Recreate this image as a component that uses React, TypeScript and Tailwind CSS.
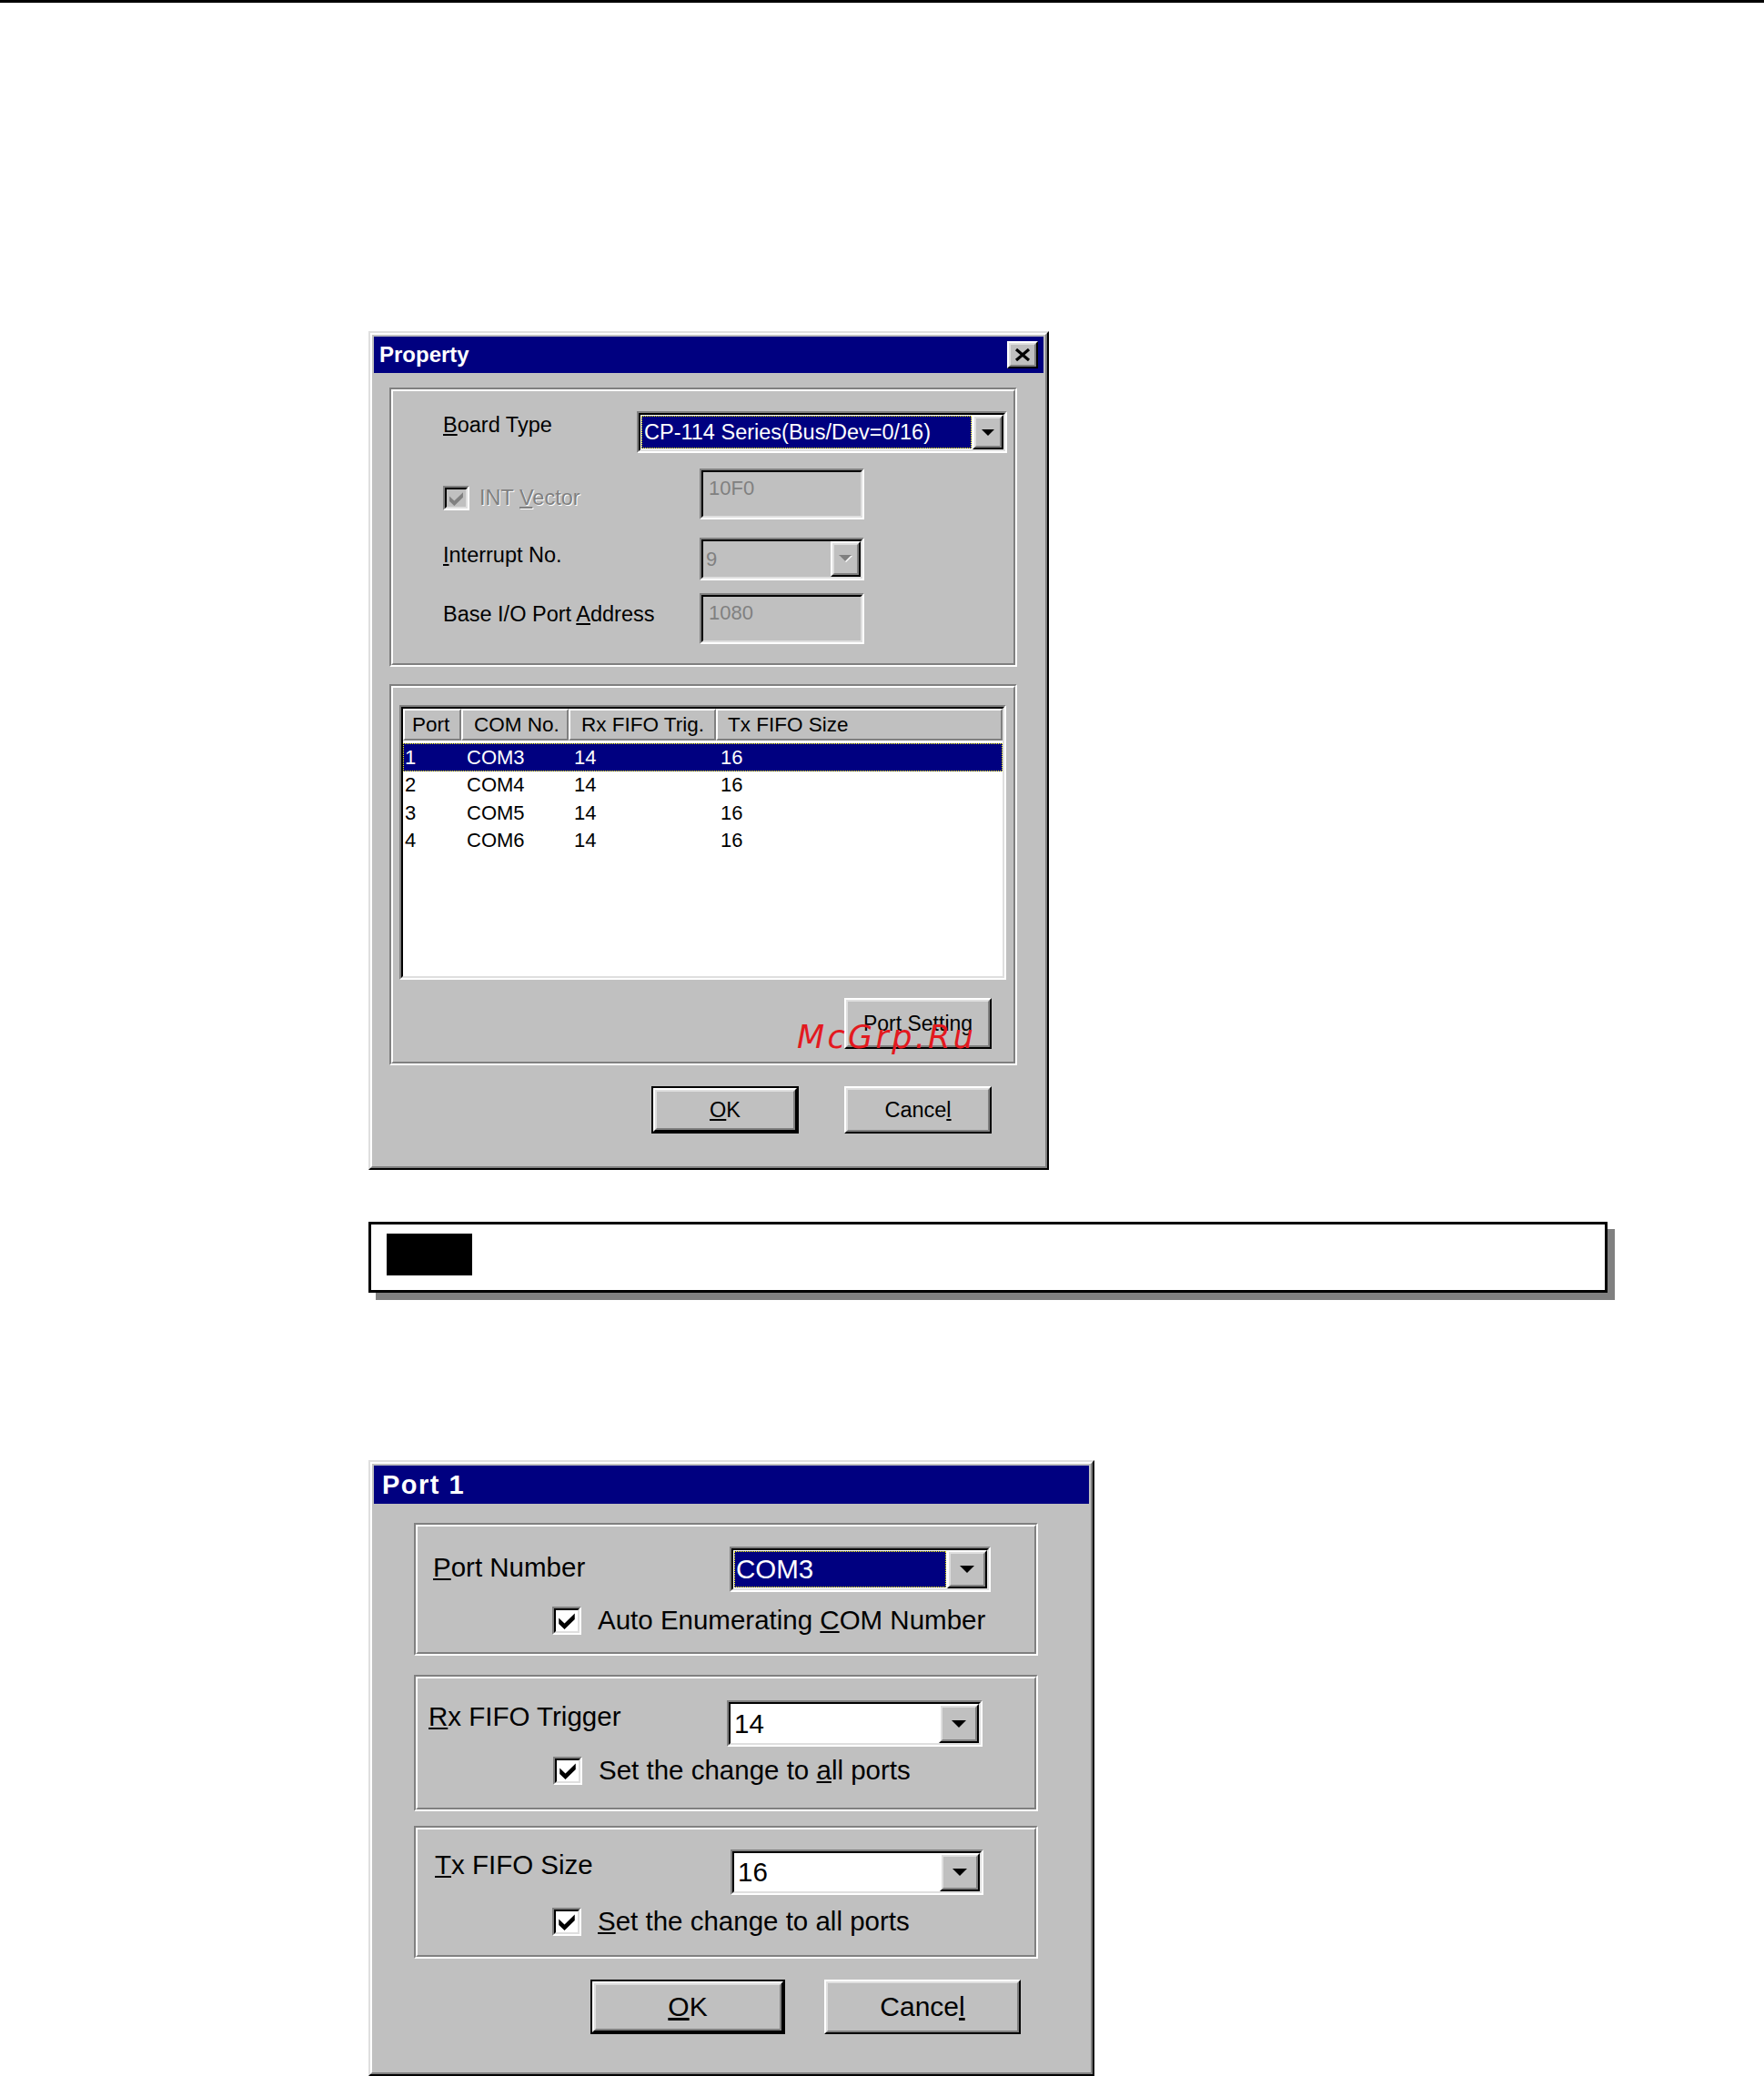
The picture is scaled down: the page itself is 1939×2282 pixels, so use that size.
import React from "react";

type BoxProps = {
  className?: string;
  inner?: string;
  children?: React.ReactNode;
};

// Win98 style bevels, every edge doubled to 2px
const Raised = ({ className = "", inner = "", children }: BoxProps) => (
  <div
    className={`border-2 border-t-white border-l-white border-r-black border-b-black ${className}`}
  >
    <div
      className={`flex h-full w-full items-center justify-center border-2 border-t-[#dfdfdf] border-l-[#dfdfdf] border-r-[#808080] border-b-[#808080] bg-[#c0c0c0] ${inner}`}
    >
      {children}
    </div>
  </div>
);

const Sunken = ({ className = "", inner = "", children }: BoxProps) => (
  <div
    className={`border-2 border-t-[#808080] border-l-[#808080] border-r-white border-b-white ${className}`}
  >
    <div
      className={`h-full w-full border-2 border-t-black border-l-black border-r-[#dfdfdf] border-b-[#dfdfdf] ${inner}`}
    >
      {children}
    </div>
  </div>
);

const Group = ({ className = "", inner = "", children }: BoxProps) => (
  <div
    className={`border-2 border-t-[#808080] border-l-[#808080] border-r-white border-b-white ${className}`}
  >
    <div
      className={`h-full w-full border-2 border-t-white border-l-white border-r-[#808080] border-b-[#808080] ${inner}`}
    >
      {children}
    </div>
  </div>
);

const Arrow = ({ w = 14, h = 7, color = "#000" }: { w?: number; h?: number; color?: string }) => (
  <svg width={w} height={h} viewBox="0 0 14 7">
    <path d="M0 0H14L7 7Z" fill={color} />
  </svg>
);

const Check = ({ size = 22, color = "#000" }: { size?: number; color?: string }) => (
  <svg width={size} height={size} viewBox="0 0 8 8">
    <polygon points="0.5,3 3,5.4 7.5,1 7.5,3.6 3,8 0.5,5.6" fill={color} />
  </svg>
);

const Window = ({ className = "", children }: BoxProps) => (
  <div
    className={`border-2 border-t-[#dfdfdf] border-l-[#dfdfdf] border-r-black border-b-black ${className}`}
  >
    <div className="flex h-full w-full flex-col border-2 border-t-white border-l-white border-r-[#808080] border-b-[#808080] bg-[#c0c0c0] p-[2px]">
      {children}
    </div>
  </div>
);

const columns = [
  { w: "w-[64px]", head: "Port", hp: "pl-[8px]", rp: "pl-[1px]" },
  { w: "w-[118px]", head: "COM No.", hp: "pl-[12px]", rp: "pl-[5px]" },
  { w: "w-[162px]", head: "Rx FIFO Trig.", hp: "pl-[12px]", rp: "pl-[5px]" },
  { w: "flex-1", head: "Tx FIFO Size", hp: "pl-[11px]", rp: "pl-[4px]" },
];

const ports = [
  ["1", "COM3", "14", "16"],
  ["2", "COM4", "14", "16"],
  ["3", "COM5", "14", "16"],
  ["4", "COM6", "14", "16"],
];

const PropertyDialog = () => (
  <Window className="relative h-[922px] w-[748px]">
    <div className="flex h-[40px] items-center justify-between bg-[#000080] pl-[6px] pr-[6px]">
      <span className="text-[24px] font-bold leading-none text-white">Property</span>
      <Raised className="h-[30px] w-[34px]">
        <svg width="18" height="14" viewBox="0 0 18 14">
          <path d="M2 1L16 13M16 1L2 13" stroke="#000" strokeWidth="3.2" />
        </svg>
      </Raised>
    </div>

    <div className="flex flex-col pl-[17px] pr-[29px] pt-[16px] text-[23.5px] leading-[27px] text-black">
      {/* board settings */}
      <Group className="h-[307px] w-[690px]" inner="pl-[55px] pt-[22px]">
        <div className="flex items-start">
          <span className="mt-[2px] w-[213px]">
            <u>B</u>oard Type
          </span>
          <Sunken className="h-[46px] w-[407px]" inner="flex bg-white">
            <div className="m-[1px] flex flex-1 items-center border border-dotted border-[#ffff00] bg-[#000080] pl-[2px] text-white">
              CP-114 Series(Bus/Dev=0/16)
            </div>
            <Raised className="h-full w-[34px]">
              <Arrow />
            </Raised>
          </Sunken>
        </div>

        <div className="mt-[17px] flex items-start">
          <div className="mt-[19px] flex w-[282px] items-center">
            <Sunken className="h-[27px] w-[29px]" inner="flex items-center justify-center bg-[#c0c0c0]">
              <Check size={17} color="#808080" />
            </Sunken>
            <span className="ml-[11px] text-[#808080] [text-shadow:1px_1px_0_#fff]">
              INT <u>V</u>ector
            </span>
          </div>
          <Sunken className="h-[56px] w-[181px]" inner="bg-[#c0c0c0] pl-[6px] pt-[4px]">
            <span className="text-[22px] leading-[25px] text-[#808080]">10F0</span>
          </Sunken>
        </div>

        <div className="mt-[20px] flex items-start">
          <span className="mt-[6px] w-[282px]">
            <u>I</u>nterrupt No.
          </span>
          <Sunken className="h-[47px] w-[181px]" inner="flex bg-[#c0c0c0]">
            <div className="flex flex-1 items-center pl-[3px] text-[22px] text-[#808080]">9</div>
            <Raised className="h-full w-[33px]">
              <svg width="15" height="9" viewBox="0 0 15 9">
                <path d="M1 1H15L8 8Z" fill="#fff" />
                <path d="M0 0H14L7 7Z" fill="#808080" />
              </svg>
            </Raised>
          </Sunken>
        </div>

        <div className="mt-[14px] flex items-start">
          <span className="mt-[10px] w-[282px]">
            Base I/O Port <u>A</u>ddress
          </span>
          <Sunken className="h-[56px] w-[181px]" inner="bg-[#c0c0c0] pl-[6px] pt-[4px]">
            <span className="text-[22px] leading-[25px] text-[#808080]">1080</span>
          </Sunken>
        </div>
      </Group>

      {/* port list */}
      <Group className="mt-[19px] h-[419px] w-[690px]" inner="pl-[7px] pt-[19px]">
        <Sunken className="h-[302px] w-[667px]" inner="bg-white">
          <div className="flex h-[35px]">
            {columns.map((c) => (
              <div
                key={c.head}
                className={`${c.w} flex items-center border-2 border-t-white border-l-white border-r-[#808080] border-b-[#808080] bg-[#c0c0c0] ${c.hp} text-[22.5px]`}
              >
                {c.head}
              </div>
            ))}
          </div>
          <div className="mt-[3px] flex flex-col text-[22px]">
            {ports.map((row, i) => (
              <div
                key={row[0]}
                className={`flex h-[30.5px] items-center ${
                  i === 0
                    ? "border border-dotted border-[#ffff00] bg-[#000080] text-white"
                    : "border border-transparent"
                }`}
              >
                {row.map((cell, j) => (
                  <div key={j} className={`${columns[j].w} ${columns[j].rp}`}>
                    {cell}
                  </div>
                ))}
              </div>
            ))}
          </div>
        </Sunken>
        <Raised className="ml-[489px] mt-[20px] h-[56px] w-[162px]">
          <span className="text-[23px]">Port Setting</span>
        </Raised>
      </Group>

      <div className="mt-[23px] flex justify-end gap-[50px] pr-[28px]">
        <div className="h-[52px] w-[162px] border-2 border-black">
          <Raised className="h-full w-full">
            <span>
              <u>O</u>K
            </span>
          </Raised>
        </div>
        <Raised className="h-[52px] w-[162px]">
          <span>
            Cance<u>l</u>
          </span>
        </Raised>
      </div>
    </div>

    <span className="absolute left-[469px] top-[757px] font-['DejaVu_Sans',sans-serif] text-[35px] italic leading-none tracking-[3.3px] text-[#e3191f]">
      McGrp.Ru
    </span>
  </Window>
);

type PortGroupProps = {
  className?: string;
  label: React.ReactNode;
  labelW: string;
  labelPad: string;
  labelTop: string;
  comboW: string;
  comboH: string;
  padTop: string;
  value: string;
  selected?: boolean;
  checkPos: string;
  check: React.ReactNode;
};

const PortGroup = (p: PortGroupProps) => (
  <Group className={`w-[686px] ${p.className}`} inner={`${p.labelPad} ${p.padTop}`}>
    <div className="flex items-start">
      <span className={`${p.labelW} ${p.labelTop}`}>{p.label}</span>
      <Sunken className={`${p.comboW} ${p.comboH}`} inner="flex bg-white">
        {p.selected ? (
          <div className="m-[1px] flex flex-1 items-center border border-dotted border-[#ffff00] bg-[#000080] pl-[1px] text-white">
            {p.value}
          </div>
        ) : (
          <div className="flex flex-1 items-center pl-[4px]">{p.value}</div>
        )}
        <Raised className="h-full w-[44px]">
          <Arrow w={16} h={8} />
        </Raised>
      </Sunken>
    </div>
    <div className={`flex items-center ${p.checkPos}`}>
      <Sunken className="h-[31px] w-[32px]" inner="flex items-center justify-center bg-white">
        <Check size={20} />
      </Sunken>
      <span className="ml-[18px]">{p.check}</span>
    </div>
  </Group>
);

const PortDialog = () => (
  <Window className="h-[677px] w-[798px]">
    <div className="flex h-[42px] items-center bg-[#000080] pl-[9px]">
      <span className="text-[29px] font-bold leading-none tracking-[1.5px] text-white">Port 1</span>
    </div>
    <div className="flex flex-col pl-[44px] pr-[51px] pt-[21px] text-[29.5px] leading-[34px] text-black">
      <PortGroup
        className="h-[146px]"
        label={
          <>
            <u>P</u>ort Number
          </>
        }
        labelW="w-[326px]"
        labelPad="pl-[17px]"
        labelTop="mt-[6px]"
        comboW="w-[287px]"
        comboH="h-[50px]"
        padTop="pt-[22px]"
        value="COM3"
        selected
        checkPos="ml-[131px] mt-[14px]"
        check={
          <>
            Auto Enumerating <u>C</u>OM Number
          </>
        }
      />
      <PortGroup
        className="mt-[21px] h-[150px]"
        label={
          <>
            <u>R</u>x FIFO Trigger
          </>
        }
        labelW="w-[328px]"
        labelPad="pl-[12px]"
        labelTop="mt-[1px]"
        comboW="w-[281px]"
        comboH="h-[51px]"
        padTop="pt-[24px]"
        value="14"
        checkPos="ml-[137px] mt-[9px]"
        check={
          <>
            Set the change to <u>a</u>ll ports
          </>
        }
      />
      <PortGroup
        className="mt-[16px] h-[146px]"
        label={
          <>
            <u>T</u>x FIFO Size
          </>
        }
        labelW="w-[325px]"
        labelPad="pl-[19px]"
        labelTop="mt-0"
        comboW="w-[278px]"
        comboH="h-[50px]"
        padTop="pt-[22px]"
        value="16"
        checkPos="ml-[129px] mt-[12px]"
        check={
          <>
            <u>S</u>et the change to all ports
          </>
        }
      />

      <div className="mt-[23px] flex justify-end gap-[43px] pr-[24px] text-[30px]">
        <div className="h-[60px] w-[214px] border-2 border-black">
          <Raised className="h-full w-full">
            <span>
              <u>O</u>K
            </span>
          </Raised>
        </div>
        <Raised className="h-[60px] w-[216px]">
          <span>
            Cance<u>l</u>
          </span>
        </Raised>
      </div>
    </div>
  </Window>
);

export default function App() {
  return (
    <div className="min-h-[2282px] w-full overflow-hidden bg-white font-['Liberation_Sans',Arial,sans-serif]">
      <div className="h-[3px] bg-black" />
      <div className="flex flex-col pl-[405px] pt-[361px]">
        <PropertyDialog />

        {/* note banner */}
        <div className="mt-[57px] h-[78px] w-[1362px] border-[3px] border-black bg-white pl-[17px] pt-[10px] shadow-[8px_8px_0_0_#808080]">
          <div className="h-[46px] w-[94px] bg-black" />
        </div>

        <div className="mt-[184px]">
          <PortDialog />
        </div>
      </div>
    </div>
  );
}
